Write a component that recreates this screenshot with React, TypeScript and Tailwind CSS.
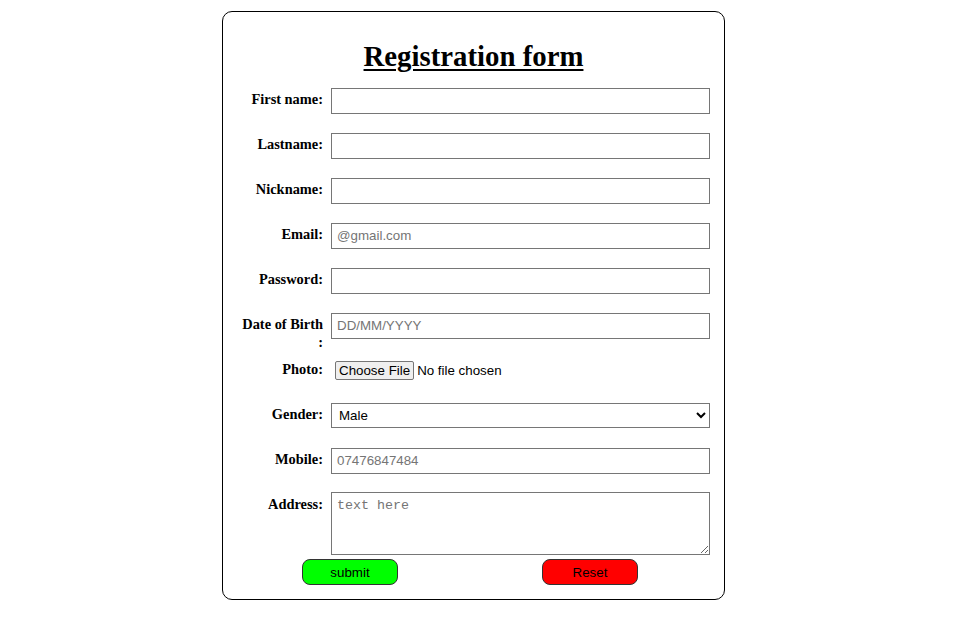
import React from 'react';

const labelCls =
  "w-[90px] shrink-0 text-right font-bold text-[14.4px] leading-[18px] pt-[3px] text-black [font-family:'Liberation_Serif',serif]";
const inputCls =
  "w-[379px] h-[26px] border border-[#767676] bg-white px-[5px] text-[13.33px] text-black placeholder:text-[#757575] outline-none [font-family:'Liberation_Sans',Arial,sans-serif]";
const btnCls =
  "w-[96px] h-[26px] pt-[2px] rounded-[8px] border border-[#333] text-[13.33px] text-black [font-family:'Liberation_Sans',Arial,sans-serif]";

function Row({ label, children }: { label: React.ReactNode; children: React.ReactNode }) {
  return (
    <div className="flex h-[45px] gap-2">
      <div className={labelCls}>{label}</div>
      <div>{children}</div>
    </div>
  );
}

export default function App() {
  return (
    <div className="min-h-[643px] bg-white pt-[11px] pl-[222px]">
      <form className="w-[503px] h-[589px] border border-black rounded-[10px] bg-white pl-[10px] pt-[28px]">
        <h1 className="text-center pr-[10px] text-[28.8px] leading-[33px] font-bold underline underline-offset-[3px] decoration-[2px] text-black [font-family:'Liberation_Serif',serif] mb-[14px]">
          Registration form
        </h1>

        <Row label="First name:">
          <input type="text" className={inputCls} />
        </Row>
        <Row label="Lastname:">
          <input type="text" className={inputCls} />
        </Row>
        <Row label="Nickname:">
          <input type="text" className={inputCls} />
        </Row>
        <Row label="Email:">
          <input type="email" placeholder="@gmail.com" className={inputCls} />
        </Row>
        <Row label="Password:">
          <input type="password" className={inputCls} />
        </Row>
        <Row label={<>Date of Birth<br />:</>}>
          <input type="text" placeholder="DD/MM/YYYY" className={inputCls} />
        </Row>
        <Row label="Photo:">
          <div className="flex items-center mt-[4px] ml-[4px] text-[13.33px] text-black [font-family:'Liberation_Sans',Arial,sans-serif]">
            <span className="h-[19px] px-[3px] border border-[#767676] bg-[#efefef] rounded-[2px] leading-[17px]">
              Choose File
            </span>
            <span className="ml-[3px]">No file chosen</span>
          </div>
        </Row>
        <Row label="Gender:">
          <select className="w-[379px] h-[25px] border border-[#767676] bg-white pl-[3px] text-[13.33px] text-black outline-none [font-family:'Liberation_Sans',Arial,sans-serif]">
            <option>Male</option>
            <option>Female</option>
          </select>
        </Row>
        <Row label="Mobile:">
          <input type="tel" placeholder="07476847484" className={inputCls} />
        </Row>
        <div className="flex h-[67px] gap-2">
          <div className={labelCls}>Address:</div>
          <textarea
            placeholder="text here"
            className="w-[379px] h-[63px] border border-[#767676] bg-white px-[5px] py-[5px] text-[13.33px] leading-[16px] text-black placeholder:text-[#757575] outline-none [font-family:'Liberation_Mono',monospace]"
          />
        </div>
        <div className="flex pl-[69px] gap-[144px]">
          <button type="submit" className={`${btnCls} bg-[#00ff00]`}>
            submit
          </button>
          <button type="reset" className={`${btnCls} bg-[#ff0000]`}>
            Reset
          </button>
        </div>
      </form>
    </div>
  );
}
